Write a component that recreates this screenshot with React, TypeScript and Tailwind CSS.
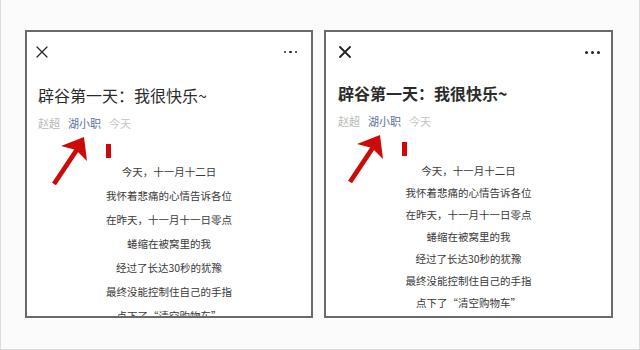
const lines = [
  "今天，十一月十二日",
  "我怀着悲痛的心情告诉各位",
  "在昨天，十一月十一日零点",
  "蜷缩在被窝里的我",
  "经过了长达30秒的犹豫",
  "最终没能控制住自己的手指",
  "点下了“清空购物车”",
];

type PanelProps = {
  bold?: boolean;
  width: string;
  lineHeight: string;
  padX: string;
  dx: number;
};

function Arrow({ dx, dy }: { dx: number; dy: number }) {
  const t = (x: number, y: number) => `${x + dx},${y + dy}`;
  return (
    <svg className="absolute left-0 top-0 pointer-events-none" width="300" height="300">
      <line x1={28 + dx} y1={152 + dy} x2={52 + dx} y2={116 + dy} stroke="#cc0a0a" strokeWidth="4.8" />
      <polygon points={`${t(58, 105)} ${t(35, 114)} ${t(50, 118)} ${t(61, 129)}`} fill="#cc0a0a" />
      <rect x={80 + dx} y={112 + dy} width="5" height="14" fill="#cc0a0a" />
    </svg>
  );
}

function Panel({ bold, width, lineHeight, padX, dx }: PanelProps) {
  return (
    <div className={`relative ${width} h-[288px] border-2 border-[#6a6a6a] bg-white overflow-hidden`}>
      <div className={`h-[40px] flex items-center justify-between ${padX}`}>
        <svg width="12" height="12" viewBox="0 0 12 12">
          <path
            d="M1 1 L11 11 M11 1 L1 11"
            stroke="#222"
            strokeWidth={bold ? 1.8 : 1.2}
            strokeLinecap="round"
          />
        </svg>
        <div className="flex gap-[3px]">
          {[0, 1, 2].map((i) => (
            <span
              key={i}
              className={`rounded-full bg-[#222] ${bold ? "w-[3px] h-[3px]" : "w-[2.5px] h-[2.5px]"}`}
            />
          ))}
        </div>
      </div>
      <div
        className={`text-[16px] leading-[20px] text-[#2b2b2b] ${
          bold ? "font-bold mt-[11px] pl-[12px]" : "mt-[13px] pl-[11px]"
        }`}
      >
        辟谷第一天：我很快乐~
      </div>
      <div className={`flex gap-[8px] text-[11px] leading-[14px] mt-[11px] ${bold ? "pl-[12px]" : "pl-[11px]"}`}>
        <span className="text-[#b8b8b8]">赵超</span>
        <span className="text-[#5f73a0]">湖小职</span>
        <span className="text-[#c4c4c4]">今天</span>
      </div>
      <div
        className={`flex flex-col items-center text-[10.5px] text-[#3a3a3a] ${lineHeight} ${
          bold ? "mt-[32px]" : "mt-[30px]"
        }`}
      >
        {lines.map((l) => (
          <div key={l}>{l}</div>
        ))}
      </div>
      <Arrow dx={dx} dy={bold ? -2 : 0} />
    </div>
  );
}

export default function App() {
  return (
    <div
      className="w-[640px] h-[350px] bg-[#fbfbfb] border-l border-r border-b border-[#dcdcdc] pl-[24px] pt-[30px] flex gap-[11px]"
      style={{ fontFamily: '"Noto Sans CJK SC", "Noto Sans", sans-serif' }}
    >
      <Panel width="w-[288px]" lineHeight="leading-[24px]" padX="pl-[9px] pr-[14px]" dx={-1} />
      <Panel bold width="w-[289px]" lineHeight="leading-[22px]" padX="pl-[13px] pr-[11px]" dx={-4} />
    </div>
  );
}
